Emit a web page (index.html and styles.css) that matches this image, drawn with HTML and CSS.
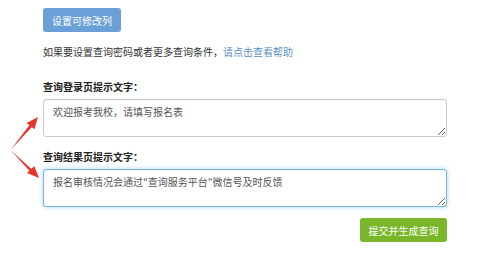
FILE: index.html
```html
<!DOCTYPE html>
<html>
<head>
<meta charset="utf-8">
<link rel="stylesheet" href="styles.css">
</head>
<body>
<div class="page">
  <div class="btn-row"><button class="btn btn-blue">设置可修改列</button></div>
  <p class="hint">如果要设置查询密码或者更多查询条件，<a class="link">请点击查看帮助</a></p>
  <div class="field">
    <label class="label">查询登录页提示文字：</label>
    <textarea class="input">欢迎报考我校，请填写报名表</textarea>
  </div>
  <div class="field">
    <label class="label">查询结果页提示文字：</label>
    <textarea class="input focused">报名审核情况会通过"查询服务平台"微信号及时反馈</textarea>
  </div>
  <div class="actions"><button class="btn btn-green">提交并生成查询</button></div>
</div>
<svg class="arrows" width="60" height="200" viewBox="0 0 60 200">
  <g fill="#e8352b">
    <polygon points="10.5,150 31.9,127.0 29.5,125.0"/>
    <polygon points="38,117 34.4,129.3 26.6,123.0"/>
    <polygon points="10.5,150 32.0,169.6 29.9,171.3"/>
    <polygon points="39,178 34.2,166.0 27.1,173.1"/>
  </g>
</svg>
</body>
</html>
```
FILE: styles.css
```css
html, body {
  margin: 0;
  padding: 0;
  background: #fff;
}
body {
  position: relative;
  width: 500px;
  height: 253px;
  overflow: hidden;
  font-family: "Noto Sans CJK SC", "Noto Sans", sans-serif;
  font-size: 10px;
  color: #333;
}
.page {
  padding: 8px 0 0 43px;
  width: 404px;
  display: flex;
  flex-direction: column;
}
.btn {
  border: none;
  border-radius: 3px;
  color: #fff;
  font-family: inherit;
  font-size: 10px;
  height: 24px;
  padding: 0;
  cursor: pointer;
}
.btn-blue {
  width: 78px;
  background: #6b9fd7;
}
.btn-green {
  width: 87px;
  background: #79b629;
}
.hint {
  margin: 12px 0 0;
  line-height: 16px;
  height: 16px;
}
.link {
  color: #5b8fc4;
}
.field {
  display: flex;
  flex-direction: column;
  gap: 4px;
  margin-top: 19px;
}
.field + .field {
  margin-top: 12px;
}
.label {
  font-weight: bold;
  line-height: 16px;
  height: 16px;
  color: #222;
}
.input {
  box-sizing: border-box;
  width: 404px;
  height: 38px;
  margin: 0;
  border: 1px solid #ccc;
  border-radius: 3px;
  padding: 5px 9px;
  font-family: inherit;
  font-size: 10px;
  line-height: 14px;
  color: #555;
  resize: vertical;
  box-shadow: inset 0 1px 1px rgba(0,0,0,.06);
}
.input.focused {
  border-color: #79b3e6;
  box-shadow: inset 0 1px 1px rgba(0,0,0,.05), 0 0 5px rgba(102,175,233,.55);
  outline: none;
}
.actions {
  display: flex;
  justify-content: flex-end;
  margin-top: 11px;
}
.arrows {
  position: absolute;
  left: 0;
  top: 0;
}
```
